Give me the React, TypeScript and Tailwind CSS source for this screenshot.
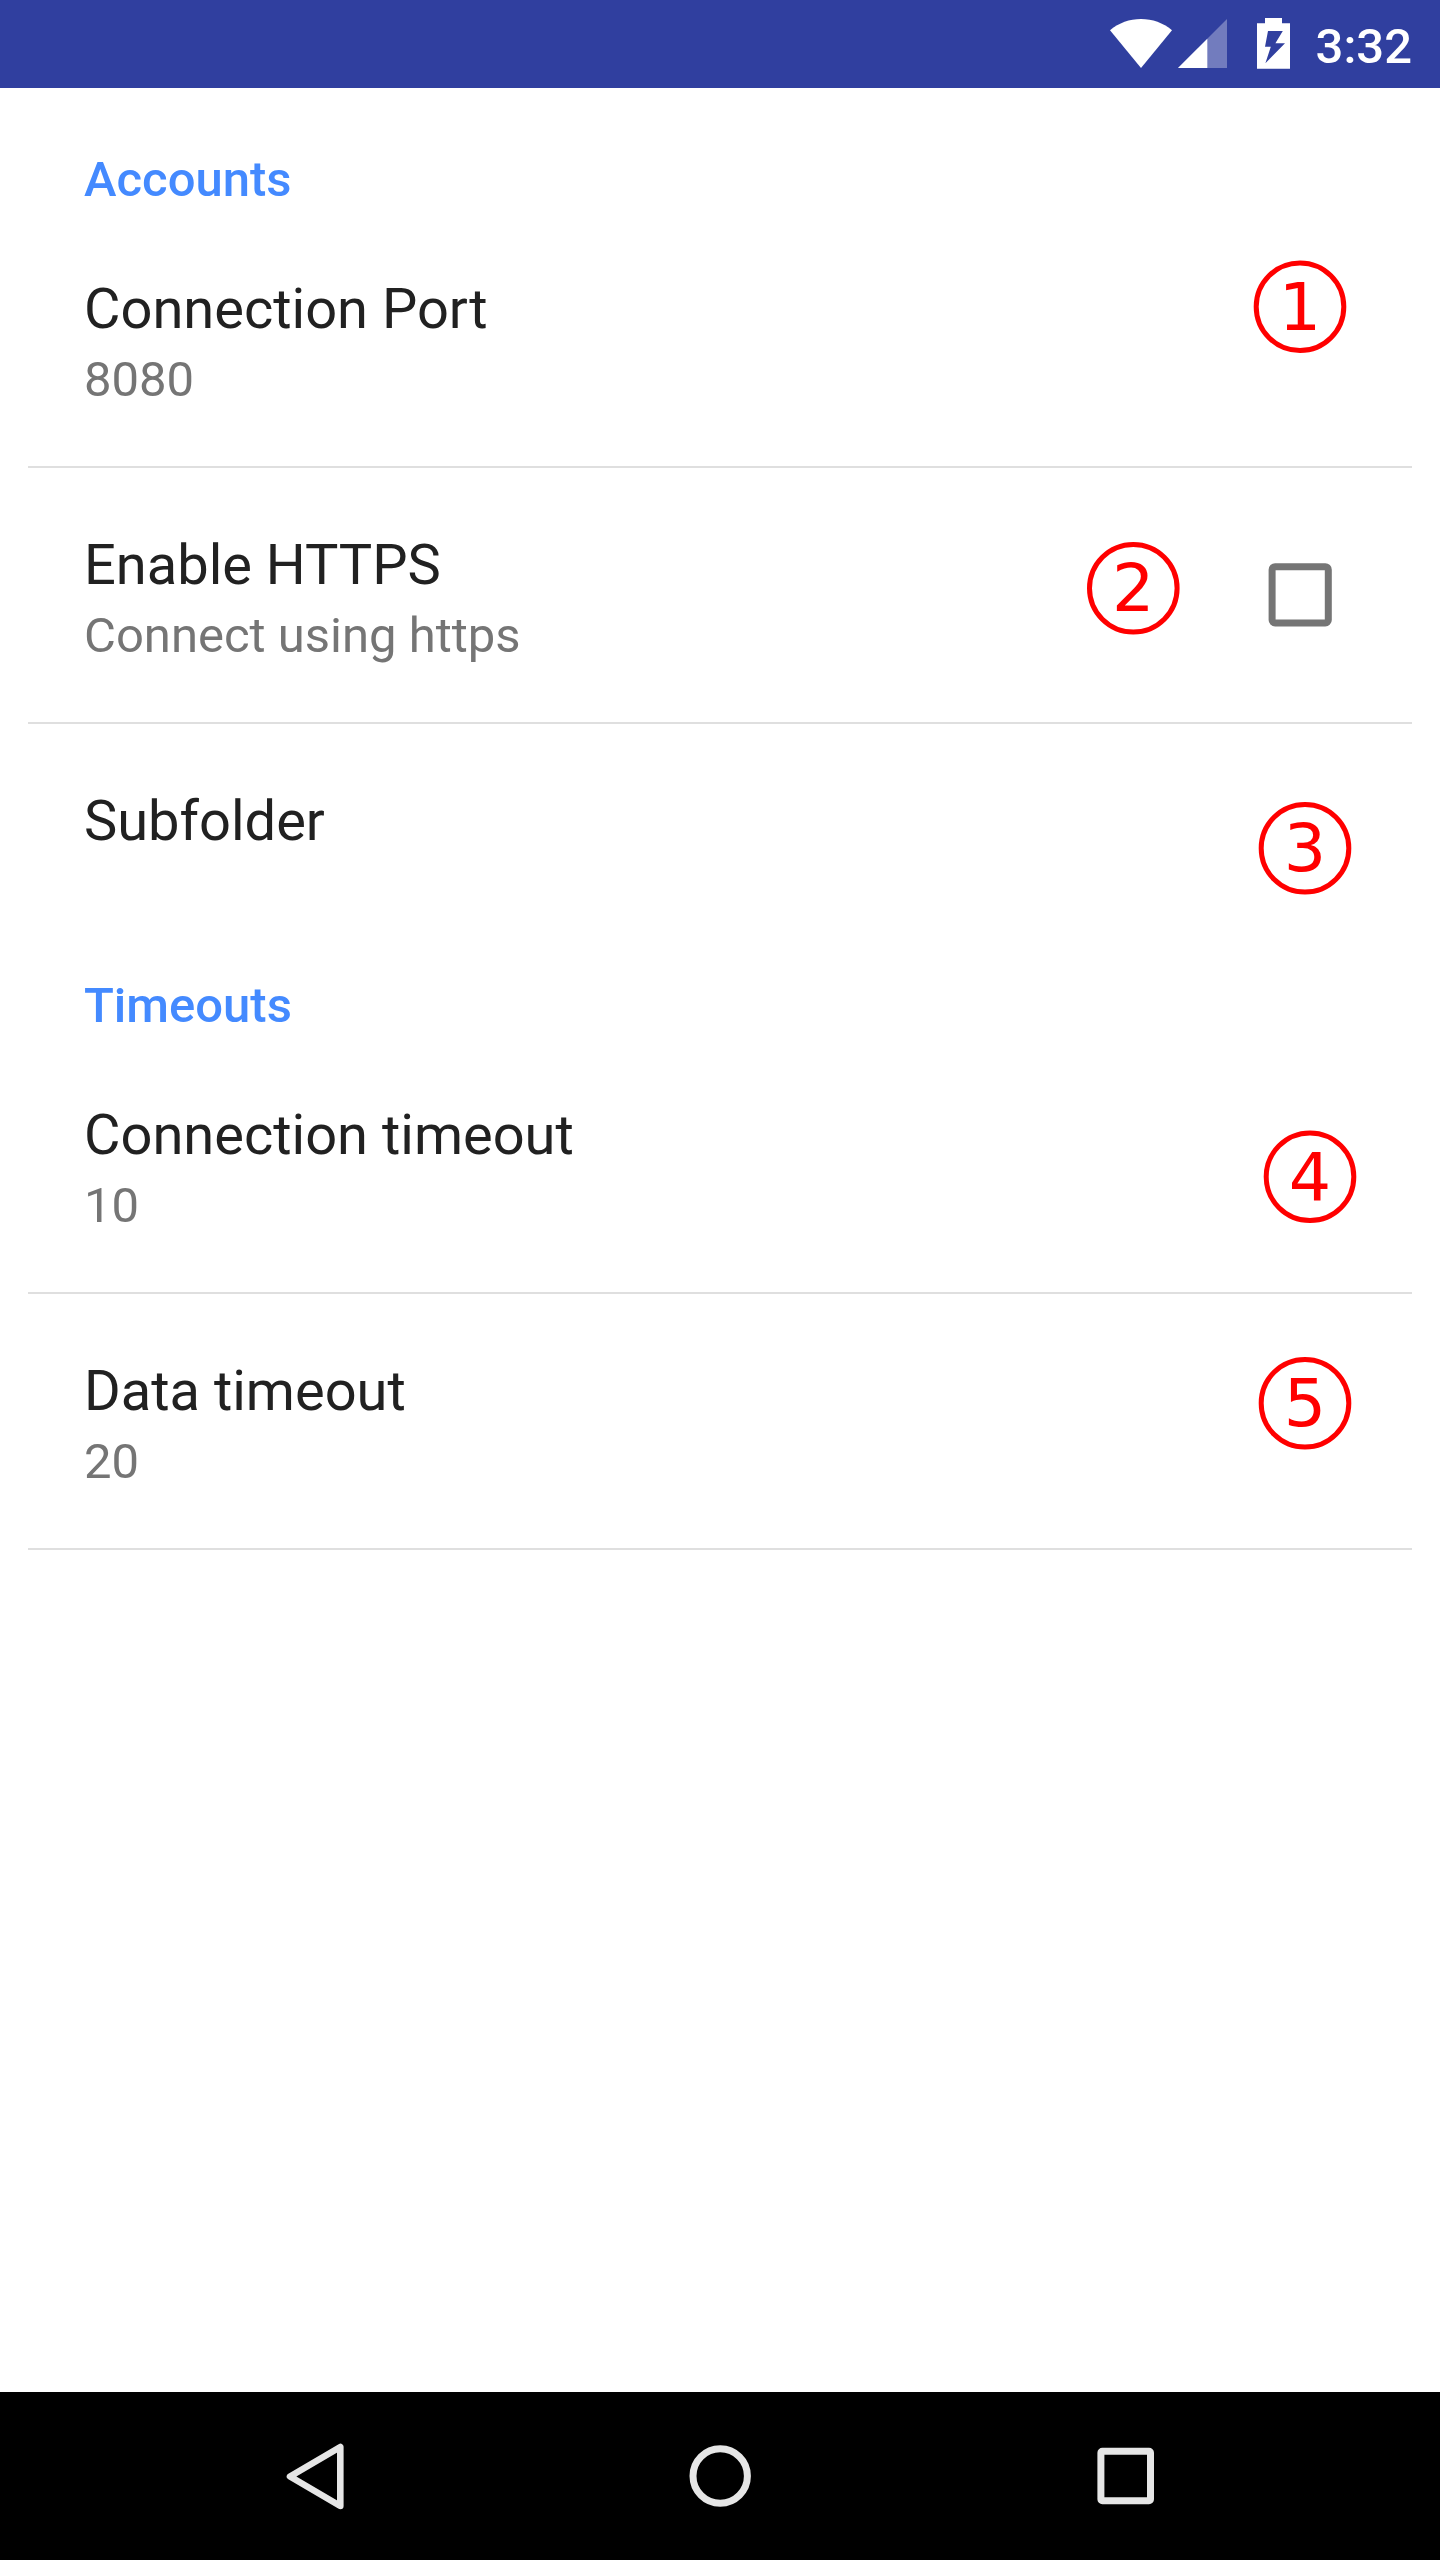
import React from "react";

type BadgeProps = { label: string; className: string; dx?: number; dy?: number };

/** Red numbered callout laid over a settings row. */
function Callout({ label, className, dx = 0, dy = 0 }: BadgeProps) {
  return (
    <svg width="96" height="96" viewBox="0 0 96 96" className={`absolute ${className}`}>
      <g transform={`translate(${dx} ${dy})`}>
        <circle cx="48" cy="48" r="43.8" fill="none" stroke="#ff0000" strokeWidth="5" />
        <text
          x="48"
          y="71"
          textAnchor="middle"
          fill="#ff0000"
          className="text-[66.67px] [font-family:'DejaVu_Sans',sans-serif]"
        >
          {label}
        </text>
      </g>
    </svg>
  );
}

type RowProps = {
  title: string;
  summary?: string;
  last?: boolean;
  children?: React.ReactNode;
};

function Row({ title, summary, last, children }: RowProps) {
  return (
    <div
      className={`relative mx-7 flex items-start justify-between pl-14 pt-16 ${
        last ? "h-[190px]" : "h-[256px] border-b-2 border-[#dfdfdf]"
      }`}
    >
      <div className="flex flex-col gap-2">
        <div className="text-[56px] leading-[66px] text-[#212121]">{title}</div>
        {summary && <div className="text-[49px] leading-[59px] text-[#757575]">{summary}</div>}
      </div>
      {children}
    </div>
  );
}

function Header({ children }: { children: React.ReactNode }) {
  return (
    <h2 className="h-[124px] pl-[84px] pt-[62px] text-[49px] font-medium leading-[59px] text-[#448aff]">
      {children}
    </h2>
  );
}

function StatusBar() {
  return (
    <header className="flex h-[88px] items-start justify-end bg-[#303f9f] pr-7 text-white">
      <svg width="62" height="88" viewBox="0 0 62 88" fill="currentColor">
        <path d="M31 68 0 30.2C9 22.8 19.5 19 31 19s22 3.8 31 11.2Z" />
      </svg>
      <svg width="49" height="88" viewBox="0 0 49 88" fill="currentColor" className="ml-1.5">
        <path d="M0 68 49 19V68Z" opacity=".32" />
        <path d="M0 68 29.3 38.7V68Z" />
      </svg>
      <svg width="33" height="88" viewBox="0 0 33 88" fill="currentColor" className="ml-[30px]">
        <path
          fillRule="evenodd"
          d="M8 18H25V23.2H33V68.8H0V23.2H8ZM11 31 8 46.8H13.8L8.4 63.3 28 43.2H18.4L25.8 31Z"
        />
      </svg>
      <span className="ml-[25px] mt-[17px] w-[97px] whitespace-nowrap text-right text-[49px] font-medium leading-[59px]">
        3:32
      </span>
    </header>
  );
}

function NavBar() {
  return (
    <nav className="flex h-[168px] items-center justify-center bg-black">
      <button className="flex w-[405px] justify-center" aria-label="Back">
        <svg width="96" height="96" viewBox="267 2428 96 96" fill="none" stroke="#e6e6e6">
          <path d="M340.3 2447V2506L290 2476.5Z" strokeWidth="6.6" strokeLinejoin="round" />
        </svg>
      </button>
      <button className="flex w-[405px] justify-center" aria-label="Home">
        <svg width="96" height="96" viewBox="0 0 96 96" fill="none" stroke="#e6e6e6">
          <circle cx="48.2" cy="48" r="27.2" strokeWidth="7" />
        </svg>
      </button>
      <button className="flex w-[405px] justify-center" aria-label="Overview">
        <svg width="96" height="96" viewBox="1077 2428 96 96" fill="none" stroke="#e6e6e6">
          <rect x="1100.9" y="2451.2" width="49.6" height="49.6" rx="1.5" strokeWidth="7" />
        </svg>
      </button>
    </nav>
  );
}

export default function App() {
  return (
    <div className="flex h-[2560px] w-[1440px] flex-col bg-white [font-family:Roboto,sans-serif]">
      <StatusBar />
      <main className="flex-1">
        <Header>Accounts</Header>
        <Row title="Connection Port" summary="8080">
          <Callout label="1" className="left-[1224px] top-[46px]" dy={0.7} />
        </Row>
        <Row title="Enable HTTPS" summary="Connect using https">
          <Callout label="2" className="left-[1057px] top-[72px]" dx={0.3} dy={0.3} />
          <svg width="65" height="65" viewBox="0 0 65 65" className="mr-[79px] mt-[30px]">
            <rect
              x="4.1"
              y="4.7"
              width="56.2"
              height="56.2"
              rx="3"
              fill="none"
              stroke="#757575"
              strokeWidth="7"
            />
          </svg>
        </Row>
        <Row title="Subfolder" last>
          <Callout label="3" className="left-[1229px] top-[76px]" dy={0.3} />
        </Row>
        <Header>Timeouts</Header>
        <Row title="Connection timeout" summary="10">
          <Callout label="4" className="left-[1234px] top-[90px]" dy={0.7} />
        </Row>
        <Row title="Data timeout" summary="20">
          <Callout label="5" className="left-[1229px] top-[61px]" dy={0.3} />
        </Row>
      </main>
      <NavBar />
    </div>
  );
}
